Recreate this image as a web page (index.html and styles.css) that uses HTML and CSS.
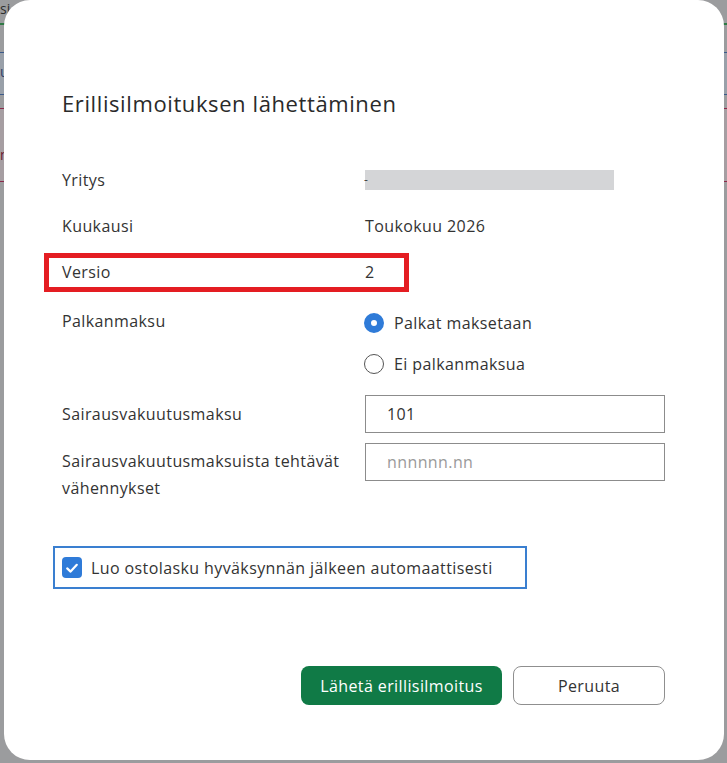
FILE: index.html
```html
<!DOCTYPE html>
<html lang="fi">
<head>
<meta charset="utf-8">
<title>Erillisilmoituksen lähettäminen</title>
<link rel="stylesheet" href="styles.css">
</head>
<body>
<div class="page">
  <div class="bg-row bg-top"><span class="bg-text">si</span></div>
  <div class="bg-row bg-green"></div>
  <div class="bg-row bg-blue"><span class="bg-text blue">u</span></div>
  <div class="bg-row bg-gap"></div>
  <div class="bg-row bg-pink"><span class="bg-text red">m</span></div>
  <div class="bg-row bg-rest"></div>
</div>

<div class="modal" role="dialog" aria-labelledby="title">
  <h1 class="title" id="title">Erillisilmoituksen lähettäminen</h1>

  <div class="form">
    <div class="row">
      <div class="label">Yritys</div>
      <div class="value"><span class="redacted"><span class="dash">-</span></span></div>
    </div>
    <div class="row">
      <div class="label">Kuukausi</div>
      <div class="value">Toukokuu 2026</div>
    </div>
    <div class="row highlighted">
      <div class="label">Versio</div>
      <div class="value">2</div>
    </div>
    <div class="row row-top">
      <div class="label label-radio">Palkanmaksu</div>
      <div class="value radios">
        <label class="radio"><span class="dot checked"></span>Palkat maksetaan</label>
        <label class="radio"><span class="dot"></span>Ei palkanmaksua</label>
      </div>
    </div>
    <div class="row row-input">
      <div class="label">Sairausvakuutusmaksu</div>
      <div class="value"><div class="input">101</div></div>
    </div>
    <div class="row row-input row-top">
      <div class="label label-multi">Sairausvakuutusmaksuista tehtävät vähennykset</div>
      <div class="value"><div class="input placeholder">nnnnnn.nn</div></div>
    </div>
  </div>

  <div class="check-box">
    <span class="checkbox">
      <svg viewBox="0 0 20 20" width="20" height="20"><path d="M5.2 10.4 L8.6 13.6 L14.8 6.8" fill="none" stroke="#fff" stroke-width="2.2" stroke-linecap="round" stroke-linejoin="round"/></svg>
    </span>
    <span class="check-label">Luo ostolasku hyväksynnän jälkeen automaattisesti</span>
  </div>

  <div class="actions">
    <button class="btn primary">Lähetä erillisilmoitus</button>
    <button class="btn secondary">Peruuta</button>
  </div>
</div>
</body>
</html>
```
FILE: styles.css
```css
html, body {
  margin: 0;
  padding: 0;
}
body {
  width: 727px;
  height: 763px;
  overflow: hidden;
  background: #9b9c9e;
  font-family: "Open Sans", "Noto Sans", sans-serif;
  position: relative;
}

/* dimmed page behind the dialog */
.page {
  display: flex;
  flex-direction: column;
}
.bg-row {
  position: relative;
  box-sizing: border-box;
}
.bg-top { height: 23px; }
.bg-green { height: 29px; border-top: 2px solid #2f7a45; }
.bg-blue {
  height: 43px;
  background: #99a0a9;
  border-top: 1px solid #3b5a8a;
  border-bottom: 1px solid #3b5a8a;
}
.bg-gap { height: 13px; }
.bg-pink {
  height: 74px;
  background: #a69ea2;
  border-top: 1px solid #8a2a4a;
  border-bottom: 1px solid #8a2a4a;
}
.bg-rest { height: 580px; }
.bg-text {
  display: block;
  margin-left: 0;
  font-size: 14px;
  line-height: 18px;
  color: #2e2e2e;
}
.bg-text.blue { color: #2d3e66; margin-top: 10px; }
.bg-text.red { color: #6b1730; margin-top: 37px; }

/* dialog */
.modal {
  position: absolute;
  left: 4px;
  top: 0;
  width: 720px;
  height: 760px;
  box-sizing: border-box;
  background: #fff;
  border-radius: 26px;
  padding: 88px 59px 0 58px;
  color: #333;
  letter-spacing: 0.4px;
}
.title {
  margin: 0;
  font-size: 22px;
  font-weight: 400;
  line-height: 30px;
  color: #2a2a2a;
  letter-spacing: 0.6px;
}

.form {
  margin-top: 39px;
  display: flex;
  flex-direction: column;
}
.row {
  display: flex;
  align-items: center;
  min-height: 46px;
  font-size: 16px;
  line-height: 22px;
}
.row-top { align-items: flex-start; }
.label {
  width: 303px;
  flex: none;
}
.value {
  width: 300px;
  flex: none;
}
.highlighted {
  position: relative;
}
.highlighted::after {
  content: "";
  position: absolute;
  left: -18px;
  top: 4px;
  width: 365px;
  height: 39px;
  box-sizing: border-box;
  border: 5px solid #e41d22;
}

.redacted {
  display: block;
  width: 249px;
  height: 20px;
  background: #d4d5d7;
  position: relative;
}
.dash {
  position: absolute;
  left: -1px;
  top: -1px;
  font-size: 12px;
  color: #444;
}

.label-radio {
  margin-top: 6px;
  line-height: 41px;
}
.radios {
  padding-top: 7px;
  display: flex;
  flex-direction: column;
}
.radio {
  display: flex;
  align-items: center;
  height: 41px;
  gap: 10px;
  font-size: 16px;
}
.dot {
  width: 20px;
  height: 20px;
  box-sizing: border-box;
  border-radius: 50%;
  border: 1.5px solid #555;
  background: #fff;
  margin-left: -1px;
}
.dot.checked {
  border: 7px solid #2f7bd8;
  background: #fff;
}

.row-input { margin-top: 11px; min-height: 37px; }
.row-input + .row-input { margin-top: 10px; }
.input {
  height: 38px;
  box-sizing: border-box;
  border: 1px solid #8c8c8c;
  padding: 0 21px;
  display: flex;
  align-items: center;
  font-size: 16px;
  color: #333;
}
.input.placeholder { color: #9a9a9a; }
.label-multi {
  padding-top: 5px;
  line-height: 27px;
}

.check-box {
  margin-top: 44px;
  margin-left: -9px;
  width: 474px;
  height: 43px;
  box-sizing: border-box;
  border: 2px solid #3a7fd0;
  display: flex;
  align-items: center;
  padding-left: 7px;
  gap: 9px;
  font-size: 16px;
  color: #333;
}
.checkbox {
  width: 20px;
  height: 21px;
  border-radius: 4px;
  background: #2f7bd8;
  display: flex;
  align-items: center;
  justify-content: center;
  flex: none;
}
.checkbox svg { display: block; }

.actions {
  margin-top: 77px;
  display: flex;
  justify-content: flex-end;
  gap: 11px;
}
.btn {
  height: 39px;
  border-radius: 8px;
  font-family: "Open Sans", "Noto Sans", sans-serif;
  font-size: 16px;
  letter-spacing: 0.4px;
  padding: 0;
  box-sizing: border-box;
}
.primary {
  width: 201px;
  background: #107a46;
  border: none;
  color: #fff;
}
.secondary {
  width: 152px;
  background: #fff;
  border: 1px solid #8f8f8f;
  color: #333;
}
```
